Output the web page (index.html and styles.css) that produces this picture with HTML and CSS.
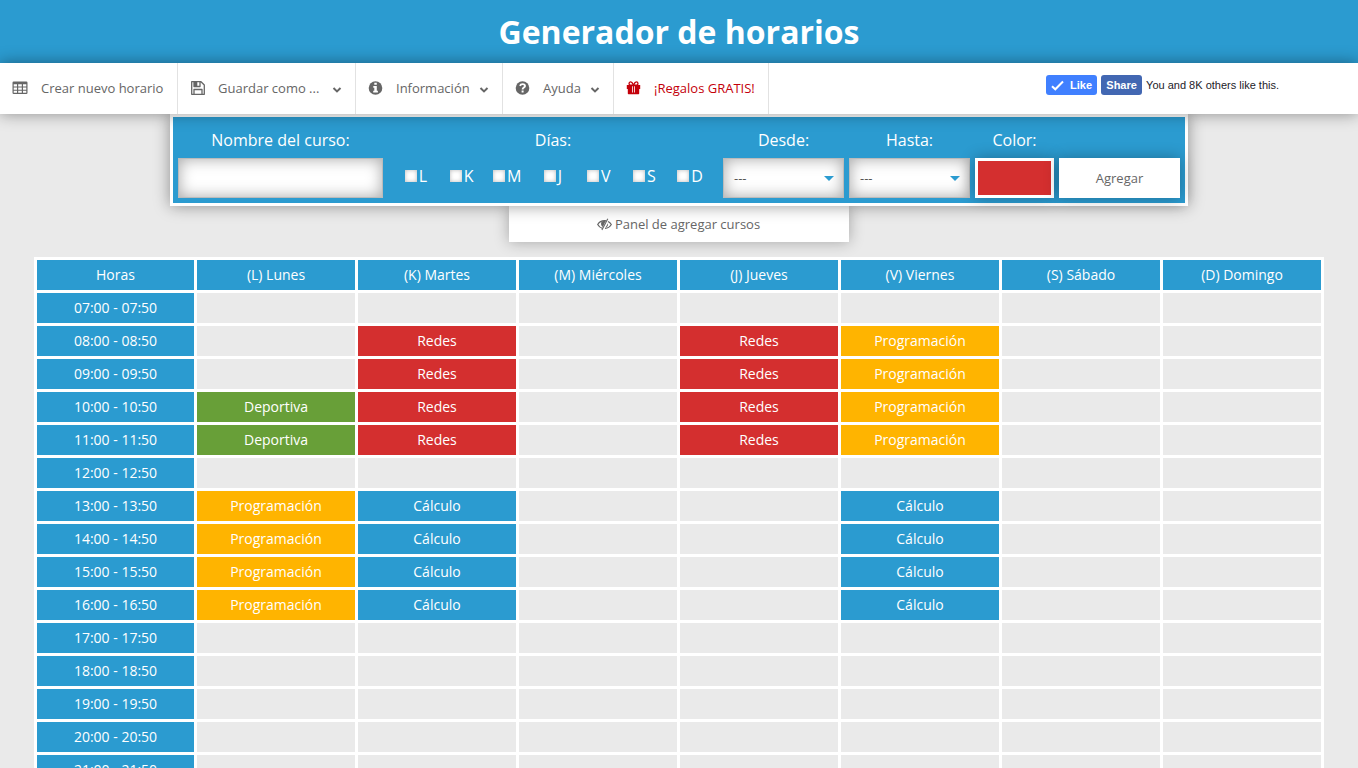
FILE: index.html
```html
<!DOCTYPE html>
<html lang="es">
<head>
<meta charset="utf-8">
<title>Generador de horarios</title>
<link rel="stylesheet" href="styles.css">
</head>
<body>
<header class="header"><h1 class="title">Generador de horarios</h1></header>
<nav class="nav">
  <ul class="menu">
    <li class="item item-new">
      <svg class="icon" viewBox="0 0 16 16"><path fill-rule="evenodd" d="M1.7 1.5h12.6q1.2 0 1.2 1.2v10.1q0 1.2-1.2 1.2H1.7Q.5 14 .5 12.800V2.700q0-1.200 1.200-1.200zM1.700 4.200v2.400h3.300V4.200zm4.500 0v2.400h3.600V4.200zm4.800 0v2.400h3.300V4.200zM1.700 7.600v2.200h3.300V7.600zm4.500 0v2.200h3.600V7.600zm4.800 0v2.200h3.300V7.600zM1.700 10.800v2h3.300v-2zm4.500 0v2h3.600v-2zm4.800 0v2h3.300v-2z"/></svg>
      <span class="label">Crear nuevo horario</span>
    </li>
    <li class="item item-save">
      <svg class="icon" viewBox="0 0 16 16"><path fill="none" stroke="currentColor" stroke-width="1.300" stroke-linejoin="round" d="M1.700 1.700h9.300l3.300 3.300v9.300H1.700zM4 14V9.500h8V14M4 2v4.500h6V2"/><path d="M4 2h3.300v4H4z"/></svg>
      <span class="label">Guardar como ...</span>
      <svg class="chevron" viewBox="0 0 10 8"><path d="M1.500 2 5 5.400 8.500 2"/></svg>
    </li>
    <li class="item item-info">
      <svg class="icon" viewBox="0 0 16 16"><circle cx="7.500" cy="8" r="6.800"/><path fill="#fff" d="M6.300 2.800h2.500v2H6.300zM5.300 6.100h3.500v4.700h1.100v1.600H5.200v-1.600h1.100V7.700h-1z"/></svg>
      <span class="label">Información</span>
      <svg class="chevron" viewBox="0 0 10 8"><path d="M1.500 2 5 5.400 8.500 2"/></svg>
    </li>
    <li class="item item-help">
      <svg class="icon" viewBox="0 0 16 16"><circle cx="7.500" cy="8" r="6.800"/><path fill="none" stroke="#fff" stroke-width="1.900" d="M5 5.900C5.500 4.500 6.400 4.100 7.500 4.100c1.500 0 2.500.8 2.500 2 0 1.500-2.400 1.500-2.400 3.300"/><path fill="#fff" d="M6.600 10.500h2v2h-2z"/></svg>
      <span class="label">Ayuda</span>
      <svg class="chevron" viewBox="0 0 10 8"><path d="M1.500 2 5 5.400 8.500 2"/></svg>
    </li>
    <li class="item item-gift">
      <svg class="icon" viewBox="0 0 16 16"><path fill="none" stroke="currentColor" stroke-width="1.300" d="M7.500 5.200H4.700a1.600 1.600 0 0 1 0-3.300C6.200 1.900 6.800 3.600 7.500 5.200 8.200 3.600 8.800 1.900 10.300 1.900a1.600 1.600 0 0 1 0 3.300z"/><path d="M.8 5h13.400v4H.8zM1.800 9h11.400v4.500q0 .7-.7.700h-10q-.7 0-.7-.7z"/><path fill="#fff" d="M6 6.200h.8v6.300H6zM8.200 6.200H9v6.300h-.8z"/></svg>
      <span class="label">¡Regalos GRATIS!</span>
    </li>
  </ul>
  <div class="social">
    <span class="fb fb-like"><svg class="check" viewBox="0 0 13 11"><path d="M1 6.200 4.300 9.300 12 1.500"/></svg>Like</span>
    <span class="fb fb-share">Share</span>
    <span class="fb-count">You and 8K others like this.</span>
  </div>
</nav>
<main class="main">
  <form class="panel">
    <label class="field">Nombre del curso:<input class="control name" type="text"></label>
    <div class="field">Días:
      <div class="days">
        <label class="day"><input class="box" type="checkbox">L</label>
        <label class="day"><input class="box" type="checkbox">K</label>
        <label class="day"><input class="box" type="checkbox">M</label>
        <label class="day"><input class="box" type="checkbox">J</label>
        <label class="day"><input class="box" type="checkbox">V</label>
        <label class="day"><input class="box" type="checkbox">S</label>
        <label class="day"><input class="box" type="checkbox">D</label>
      </div>
    </div>
    <div class="field">Desde:<div class="control select">---<span class="caret"></span></div></div>
    <div class="field">Hasta:<div class="control select">---<span class="caret"></span></div></div>
    <div class="field">Color:<div class="swatch"></div></div>
    <div class="field field-end"><button class="add" type="button">Agregar</button></div>
  </form>
  <div class="toggle">
    <svg class="eye" viewBox="0 0 15 13"><path fill="none" stroke="currentColor" stroke-width="1.200" d="M5.500 10.300C3.300 9.800 1.700 8.400.7 6.500 2.200 4 4.500 2.600 7.500 2.600c.6 0 1.200.1 1.700.2M11 3.500c1.400.7 2.500 1.700 3.300 3-1.400 2.400-3.600 3.800-6.300 3.900"/><path d="M8.800 2.800 5.800 9C4 8 3.600 5.600 4.500 3.800q1.500-1.200 4.300-1zM11 5.200c.4 2-.5 3.700-2.500 4.400z"/><path fill="none" stroke="currentColor" stroke-width="1.100" d="M10.800.8 4.900 12"/></svg>
    Panel de agregar cursos
  </div>
  <section class="schedule">
    <div class="cell head">Horas</div><div class="cell head">(L) Lunes</div><div class="cell head">(K) Martes</div><div class="cell head">(M) Miércoles</div><div class="cell head">(J) Jueves</div><div class="cell head">(V) Viernes</div><div class="cell head">(S) Sábado</div><div class="cell head">(D) Domingo</div>
    <div class="cell head">07:00 - 07:50</div><div class="cell"></div><div class="cell"></div><div class="cell"></div><div class="cell"></div><div class="cell"></div><div class="cell"></div><div class="cell"></div>
    <div class="cell head">08:00 - 08:50</div><div class="cell"></div><div class="cell red">Redes</div><div class="cell"></div><div class="cell red">Redes</div><div class="cell amber">Programación</div><div class="cell"></div><div class="cell"></div>
    <div class="cell head">09:00 - 09:50</div><div class="cell"></div><div class="cell red">Redes</div><div class="cell"></div><div class="cell red">Redes</div><div class="cell amber">Programación</div><div class="cell"></div><div class="cell"></div>
    <div class="cell head">10:00 - 10:50</div><div class="cell green">Deportiva</div><div class="cell red">Redes</div><div class="cell"></div><div class="cell red">Redes</div><div class="cell amber">Programación</div><div class="cell"></div><div class="cell"></div>
    <div class="cell head">11:00 - 11:50</div><div class="cell green">Deportiva</div><div class="cell red">Redes</div><div class="cell"></div><div class="cell red">Redes</div><div class="cell amber">Programación</div><div class="cell"></div><div class="cell"></div>
    <div class="cell head">12:00 - 12:50</div><div class="cell"></div><div class="cell"></div><div class="cell"></div><div class="cell"></div><div class="cell"></div><div class="cell"></div><div class="cell"></div>
    <div class="cell head">13:00 - 13:50</div><div class="cell amber">Programación</div><div class="cell blue">Cálculo</div><div class="cell"></div><div class="cell"></div><div class="cell blue">Cálculo</div><div class="cell"></div><div class="cell"></div>
    <div class="cell head">14:00 - 14:50</div><div class="cell amber">Programación</div><div class="cell blue">Cálculo</div><div class="cell"></div><div class="cell"></div><div class="cell blue">Cálculo</div><div class="cell"></div><div class="cell"></div>
    <div class="cell head">15:00 - 15:50</div><div class="cell amber">Programación</div><div class="cell blue">Cálculo</div><div class="cell"></div><div class="cell"></div><div class="cell blue">Cálculo</div><div class="cell"></div><div class="cell"></div>
    <div class="cell head">16:00 - 16:50</div><div class="cell amber">Programación</div><div class="cell blue">Cálculo</div><div class="cell"></div><div class="cell"></div><div class="cell blue">Cálculo</div><div class="cell"></div><div class="cell"></div>
    <div class="cell head">17:00 - 17:50</div><div class="cell"></div><div class="cell"></div><div class="cell"></div><div class="cell"></div><div class="cell"></div><div class="cell"></div><div class="cell"></div>
    <div class="cell head">18:00 - 18:50</div><div class="cell"></div><div class="cell"></div><div class="cell"></div><div class="cell"></div><div class="cell"></div><div class="cell"></div><div class="cell"></div>
    <div class="cell head">19:00 - 19:50</div><div class="cell"></div><div class="cell"></div><div class="cell"></div><div class="cell"></div><div class="cell"></div><div class="cell"></div><div class="cell"></div>
    <div class="cell head">20:00 - 20:50</div><div class="cell"></div><div class="cell"></div><div class="cell"></div><div class="cell"></div><div class="cell"></div><div class="cell"></div><div class="cell"></div>
    <div class="cell head">21:00 - 21:50</div><div class="cell"></div><div class="cell"></div><div class="cell"></div><div class="cell"></div><div class="cell"></div><div class="cell"></div><div class="cell"></div>
  </section>
</main>
</body>
</html>
```
FILE: styles.css
```css
* { box-sizing: border-box; }

body {
  margin: 0;
  height: 100vh;
  overflow: hidden;
  background: #eaeaea;
  color: #666;
  font-family: "Open Sans", "Noto Sans", sans-serif;
}

.header {
  height: 63px;
  background: #2b9bd0;
  text-align: center;
}

.title {
  margin: 0;
  color: #fff;
  font-size: 32px;
  font-weight: 700;
  line-height: 64px;
}

/* Menu bar */
.nav {
  position: relative;
  z-index: 3;
  display: flex;
  justify-content: space-between;
  height: 51px;
  background: #fff;
  box-shadow: 0 0 15px rgba(0, 0, 0, .4);
}

.menu {
  display: flex;
  margin: 0;
  padding: 0;
  list-style: none;
}

.item {
  display: flex;
  align-items: center;
  padding: 0 0 1px 12px;
  border-right: 1px solid #e2e2e2;
  font-size: 13px;
  white-space: nowrap;
}

.item-new { width: 178px; }
.item-save { width: 178px; }
.item-info { width: 147px; }
.item-help { width: 111px; }
.item-gift { width: 155px; color: #c4000a; }

.icon {
  flex: none;
  width: 16px;
  height: 16px;
  margin: 0 13px 1px 0;
  fill: currentColor;
}

.item-save .icon { margin-right: 12px; }
.item-info .icon, .item-help .icon, .item-gift .icon { margin-right: 12px; }

.chevron {
  width: 10px;
  height: 8px;
  margin: 3px 0 0 9px;
  fill: none;
  stroke: #666;
  stroke-width: 2;
}

.item-save .chevron { margin-left: 13px; }

.social {
  display: flex;
  gap: 4px;
  height: 20px;
  margin: 12px 79px 0 0;
  font: 11px/20px "Liberation Sans", Arial, sans-serif;
}

.fb {
  display: flex;
  align-items: center;
  justify-content: center;
  border-radius: 3px;
  color: #fff;
  font-weight: 700;
}

.fb-like { gap: 6px; width: 51px; background: #4080ff; }
.fb-share { width: 41px; background: #4267b2; }
.fb-count { color: #1d2129; white-space: nowrap; }

.check {
  width: 13px;
  height: 11px;
  fill: none;
  stroke: #fff;
  stroke-width: 2;
}

/* Course panel */
.panel {
  position: relative;
  z-index: 2;
  display: grid;
  grid-template-columns: 205px 330px 121px 121px 79px 121px;
  gap: 5px;
  width: 1018px;
  height: 92px;
  margin: 0 auto;
  padding: 10px 5px 5px;
  border: 3px solid #fff;
  background: #2b9bd0;
  box-shadow: 0 0 15px rgba(0, 0, 0, .4);
}

.field {
  display: flex;
  flex-direction: column;
  color: #fff;
  font-size: 16px;
  line-height: 26px;
  text-align: center;
}

.field-end { justify-content: flex-end; }

.control {
  width: 100%;
  height: 40px;
  margin-top: 5px;
  border: 1px solid #bbb;
  background: #fff;
  box-shadow: inset 0 0 15px rgba(0, 0, 0, .35);
}

.select {
  display: flex;
  align-items: center;
  justify-content: space-between;
  padding: 0 9px 0 10px;
  color: #555;
  font-size: 13px;
}

.caret {
  border: 5px solid transparent;
  border-top-color: #2b9bd0;
  border-bottom: 0;
}

.days {
  display: grid;
  grid-template-columns: repeat(7, 1fr);
  padding: 10px 5px 0;
}

.day {
  display: flex;
  align-items: center;
  justify-content: center;
  gap: 2px;
}

.box {
  width: 12px;
  height: 12px;
  margin: 0;
  appearance: none;
  background: #fff;
  box-shadow: inset 0 0 4px rgba(0, 0, 0, .28);
}

.swatch {
  height: 40px;
  margin-top: 5px;
  border: 3px solid #fff;
  background: #d42f2f;
  box-shadow: 0 0 15px rgba(0, 0, 0, .3);
}

.add {
  height: 40px;
  border: 0;
  background: #fff;
  box-shadow: 0 0 15px rgba(0, 0, 0, .3);
  color: #666;
  font: 13px "Open Sans", sans-serif;
}

.toggle {
  display: flex;
  align-items: center;
  justify-content: center;
  gap: 3px;
  width: 340px;
  height: 36px;
  margin: 0 auto;
  padding-right: 1px;
  background: #fff;
  box-shadow: 0 0 15px rgba(0, 0, 0, .3);
  font-size: 13px;
}

.eye {
  width: 15px;
  height: 13px;
  fill: currentColor;
}

/* Timetable */
.schedule {
  position: relative;
  display: grid;
  grid-template-columns: 157px repeat(7, 158px);
  grid-auto-rows: 30px;
  gap: 3px;
  width: 1290px;
  margin: 15px auto 0;
  padding: 3px;
  background: #fff;
}

.cell {
  background: #eaeaea;
  color: #fff;
  font-size: 14px;
  line-height: 30px;
  text-align: center;
}

.head, .blue { background: #2b9bd0; }
.red { background: #d42f2f; }
.amber { background: #ffb400; }
.green { background: #689f38; }
```
